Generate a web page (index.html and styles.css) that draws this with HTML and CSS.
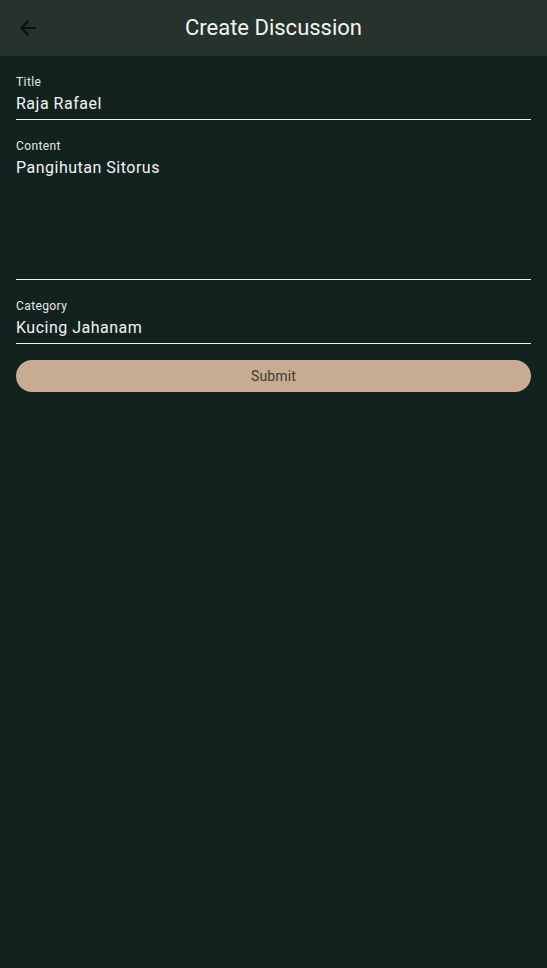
FILE: index.html
```html
<!DOCTYPE html>
<html>
<head>
<meta charset="utf-8">
<link rel="stylesheet" href="styles.css">
</head>
<body>
<header class="appbar">
  <button class="back" aria-label="Back">
    <svg width="24" height="24" viewBox="0 0 24 24"><path d="M20 11H7.83l5.59-5.59L12 4l-8 8 8 8 1.41-1.41L7.83 13H20v-2z" fill="#0b0f0d"/></svg>
  </button>
  <h1 class="title">Create Discussion</h1>
</header>
<main class="form">
  <div class="field">
    <label class="label">Title</label>
    <div class="value">Raja Rafael</div>
  </div>
  <div class="field">
    <label class="label">Content</label>
    <div class="value multi">Pangihutan Sitorus</div>
  </div>
  <div class="field">
    <label class="label">Category</label>
    <div class="value">Kucing Jahanam</div>
  </div>
  <button class="submit">Submit</button>
</main>
</body>
</html>
```
FILE: styles.css
```css
html, body {
  margin: 0;
  padding: 0;
  height: 100%;
}
body {
  background: #12231f;
  font-family: Roboto, "Noto Sans", sans-serif;
  color: #f2f2f2;
}
.appbar {
  height: 56px;
  background: #26332d;
  display: flex;
  align-items: center;
  position: relative;
}
.back {
  width: 24px;
  height: 24px;
  margin-left: 16px;
  padding: 0;
  border: 0;
  background: none;
  display: flex;
}
.title {
  position: absolute;
  left: 0;
  right: 0;
  text-align: center;
  margin: 0;
  font-size: 22px;
  line-height: 28px;
  font-weight: 400;
  color: #f4f4f4;
  pointer-events: none;
}
.form {
  padding: 18px 16px 0;
  display: flex;
  flex-direction: column;
}
.field {
  display: flex;
  flex-direction: column;
  border-bottom: 1px solid #f2f2f2;
  padding-bottom: 3px;
  margin-bottom: 18px;
}
.field:nth-child(3) {
  margin-bottom: 16px;
}
.label {
  font-size: 12px;
  line-height: 16px;
  letter-spacing: 0.4px;
  color: #e6e6e6;
}
.value {
  margin-top: 2px;
  font-size: 16px;
  line-height: 24px;
  color: #f2f2f2;
  letter-spacing: 0.5px;
}
.value.multi {
  height: 120px;
}
.submit {
  height: 32px;
  border: 0;
  border-radius: 16px;
  background: #c8ac91;
  color: #3b3b33;
  font-family: Roboto, "Noto Sans", sans-serif;
  font-size: 14px;
  letter-spacing: 0.1px;
  padding: 0;
}
```
